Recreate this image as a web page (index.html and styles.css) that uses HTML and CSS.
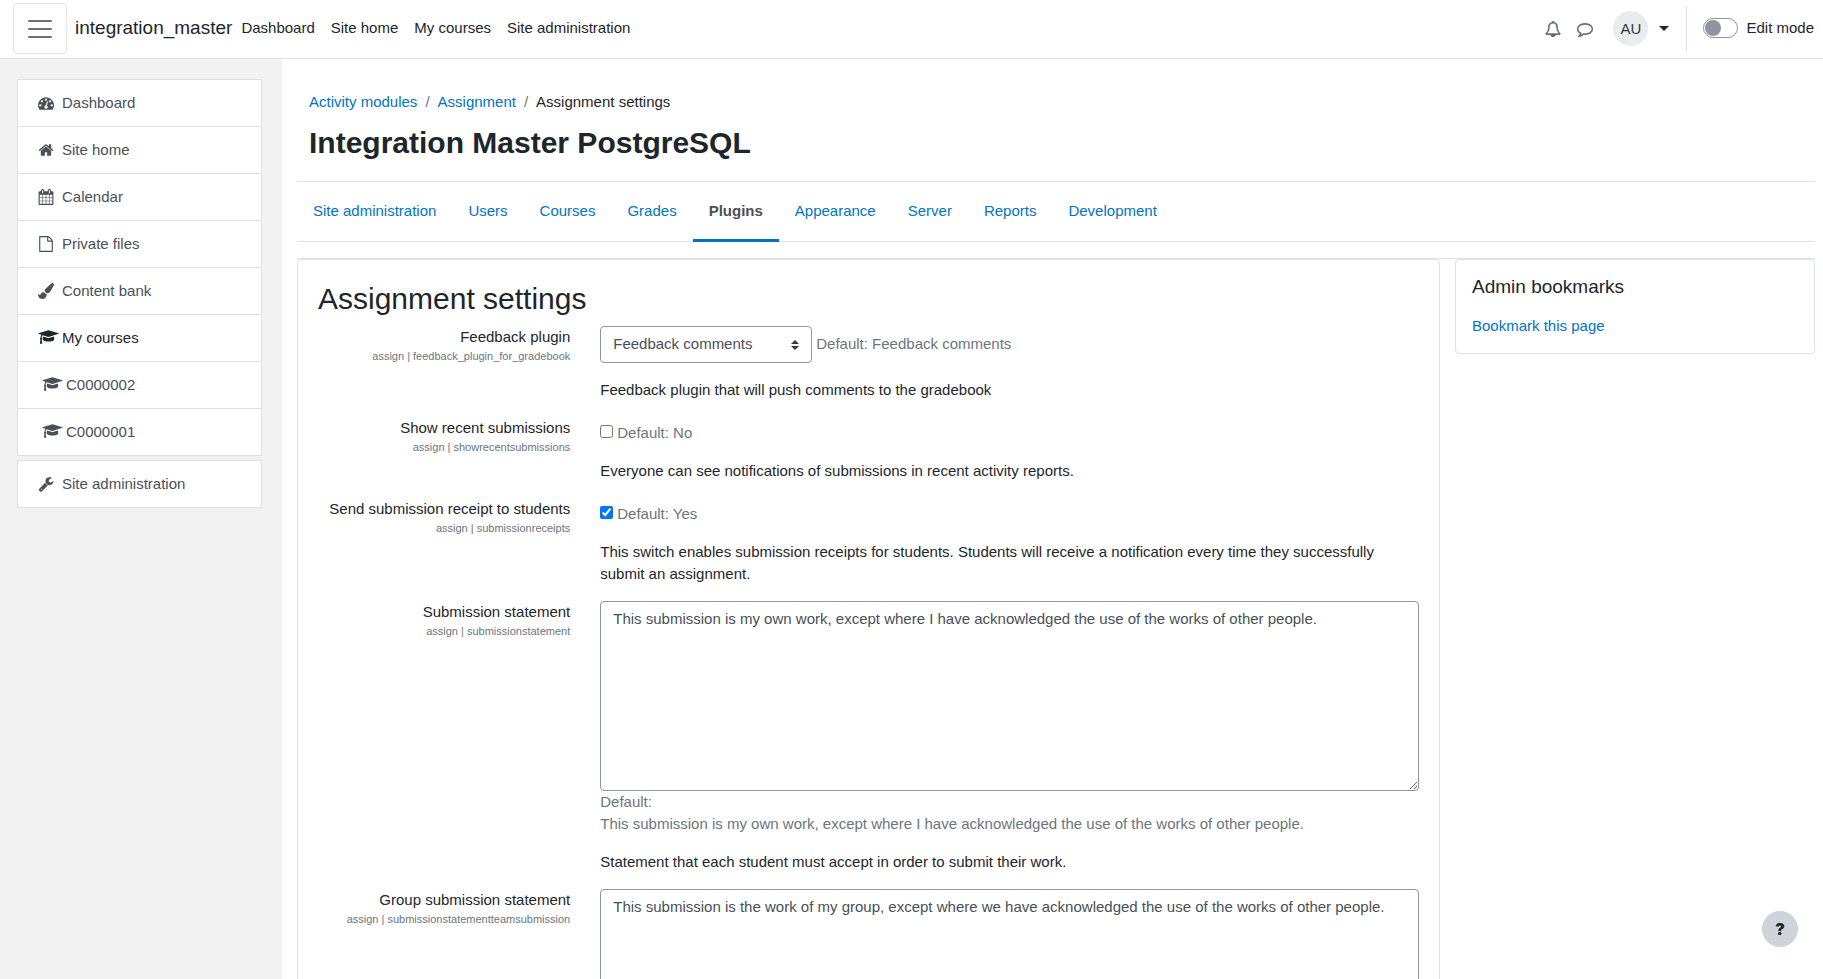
FILE: index.html
```html
<!DOCTYPE html>
<html lang="en">
  <head>
    <meta charset="UTF-8" />
    <meta name="viewport" content="width=device-width, initial-scale=1.0" />
    <title>Assignment settings</title>
    <link rel="stylesheet" href="styles.css">
  </head>
  <body>
    <svg class="sprite" aria-hidden="true">
      <symbol id="i-dashboard" viewBox="0 0 1792 1792"><path d="M384 1152q0-53-37.5-90.5t-90.5-37.5-90.5 37.5-37.5 90.5 37.5 90.5 90.5 37.5 90.5-37.5 37.5-90.5zm192-448q0-53-37.5-90.5t-90.5-37.5-90.5 37.5-37.5 90.5 37.5 90.5 90.5 37.5 90.5-37.5 37.5-90.5zm428 481l101-382q6-26-7.5-48.5t-38.5-29.5-48 6.5-30 39.5l-101 382q-60 5-107 43.5t-63 98.5q-20 77 20 146t117 89 146-20 89-117q16-60-6-117t-72-91zm660-33q0-53-37.5-90.5t-90.5-37.5-90.5 37.5-37.5 90.5 37.5 90.5 90.5 37.5 90.5-37.5 37.5-90.5zm-640-640q0-53-37.5-90.5t-90.5-37.5-90.5 37.5-37.5 90.5 37.5 90.5 90.5 37.5 90.5-37.5 37.5-90.5zm448 192q0-53-37.5-90.5t-90.5-37.5-90.5 37.5-37.5 90.5 37.5 90.5 90.5 37.5 90.5-37.5 37.5-90.5zm320 448q0 261-141 483-19 29-54 29h-1402q-35 0-54-29-141-221-141-483 0-182 71-348t191-286 286-191 348-71 348 71 286 191 191 286 71 348z"/></symbol>
      <symbol id="i-home" viewBox="0 0 1792 1792"><path d="M1472 992v480q0 26-19 45t-45 19h-384v-384h-256v384h-384q-26 0-45-19t-19-45v-480q0-1 .5-3t.5-3l575-474 575 474q1 2 1 6zm223-69l-62 74q-8 9-21 11h-3q-13 0-21-7l-692-577-692 577q-12 8-24 7-13-2-21-11l-62-74q-8-10-7-23.5t11-21.5l719-599q32-26 76-26t76 26l244 204v-195q0-14 9-23t23-9h192q14 0 23 9t9 23v408l219 182q10 8 11 21.5t-7 23.5z"/></symbol>
      <symbol id="i-calendar" viewBox="0 0 1792 1792"><path d="M192 1664h288v-288h-288v288zm352 0h320v-288h-320v288zm-352-352h288v-320h-288v320zm352 0h320v-320h-320v320zm-352-384h288v-288h-288v288zm736 736h320v-288h-320v288zm-384-736h320v-288h-320v288zm768 736h288v-288h-288v288zm-384-352h320v-320h-320v320zm-352-864v-288q0-13-9.5-22.5t-22.5-9.5h-64q-13 0-22.5 9.5t-9.5 22.5v288q0 13 9.5 22.5t22.5 9.5h64q13 0 22.5-9.5t9.5-22.5zm736 864h288v-320h-288v320zm-384-384h320v-288h-320v288zm384 0h288v-288h-288v288zm32-480v-288q0-13-9.5-22.5t-22.5-9.5h-64q-13 0-22.5 9.5t-9.5 22.5v288q0 13 9.5 22.5t22.5 9.5h64q13 0 22.5-9.5t9.5-22.5zm384-64v1280q0 52-38 90t-90 38h-1408q-52 0-90-38t-38-90v-1280q0-52 38-90t90-38h128v-96q0-66 47-113t113-47h64q66 0 113 47t47 113v96h384v-96q0-66 47-113t113-47h64q66 0 113 47t47 113v96h128q52 0 90 38t38 90z"/></symbol>
      <symbol id="i-file" viewBox="0 0 1792 1792"><path d="M1596 380q28 28 48 76t20 88v1152q0 40-28 68t-68 28h-1344q-40 0-68-28t-28-68v-1600q0-40 28-68t68-28h896q40 0 88 20t76 48zm-444-244v376h376q-10-29-22-41l-313-313q-12-12-41-22zm384 1528v-1024h-416q-40 0-68-28t-28-68v-416h-768v1536h1280z"/></symbol>
      <symbol id="i-brush" viewBox="0 0 1792 1792"><path d="M1615 0q70 0 122.5 46.5t52.5 116.5q0 63-45 151-332 629-465 752-97 91-218 91-126 0-216.5-92.5t-90.5-219.5q0-128 92-212l638-579q59-54 130-54zm-909 1034q39 76 106.5 130t150.5 76l1 71q4 213-129.5 347t-348.5 134q-123 0-218-46.5t-152.5-127.5-86.5-183-29-220q7 5 41 30t62 44.5 59 36.5 46 17q41 0 55-37 25-66 57.5-112.5t69.5-76 88-47.5 103-25.5 125-10.5z"/></symbol>
      <symbol id="i-course" viewBox="0 112 2304 1792"><path d="M1774 836l18 316q4 69-82 128t-235 93.5-323 34.5-323-34.5-235-93.5-82-128l18-316 574 181q22 7 48 7t48-7zm530-324q0 23-22 31l-1120 352q-4 1-10 1t-10-1l-652-206q-43 34-71 111.5t-34 178.5q63 36 63 109 0 69-58 107l58 433q2 14-8 25-9 11-24 11h-192q-15 0-24-11-10-11-8-25l58-433q-58-38-58-107 0-73 65-111 11-207 98-330l-333-104q-22-8-22-31t22-31l1120-352q4-1 10-1t10 1l1120 352q22 8 22 31z"/></symbol>
      <symbol id="i-wrench" viewBox="0 0 1792 1792"><path d="M448 1472q0-26-19-45t-45-19-45 19-19 45 19 45 45 19 45-19 19-45zm644-420l-682 682q-37 37-90 37-52 0-91-37l-106-108q-38-36-38-90 0-53 38-91l681-681q39 98 114.5 173.5t173.5 114.5zm634-435q0 39-23 106-47 134-164.5 217.5t-258.5 83.5q-185 0-316.5-131.5t-131.5-316.5 131.5-316.5 316.5-131.5q58 0 121.5 16.5t107.5 46.5q16 11 16 28t-16 28l-293 169v224l193 107q5-3 79-48.5t135.5-81 70.5-35.5q15 0 23.5 10t8.5 25z"/></symbol>
      <symbol id="i-bell" viewBox="0 0 1792 1792"><path d="M912 1696q0-16-16-16-59 0-101.5-42.5t-42.5-101.5q0-16-16-16t-16 16q0 73 51.5 124.5t124.5 51.5q16 0 16-16zm-666-288h1300q-266-300-266-832 0-51-24-105t-69-103-121.5-80.5-169.5-31.5-169.5 31.5-121.5 80.5-69 103-24 105q0 532-266 832zm1482 0q0 52-38 90t-90 38h-448q0 106-75 181t-181 75-181-75-75-181h-448q-52 0-90-38t-38-90q50-42 91-88t85-119.5 74.5-158.5 50-206 19.5-260q0-152 117-282.5t307-158.5q-8-19-8-39 0-40 28-68t68-28 68 28 28 68q0 20-8 39 190 28 307 158.5t117 282.5q0 139 19.5 260t50 206 74.5 158.5 85 119.5 91 88z"/></symbol>
      <symbol id="i-comment" viewBox="0 0 1792 1792"><path d="M896 384q-204 0-381.5 69.5t-282 187.5-104.5 255q0 112 71.5 213.5t201.5 175.5l87 50-27 96q-24 91-70 172 152-63 275-171l43-38 57 6q69 8 130 8 204 0 381.5-69.5t282-187.5 104.5-255-104.5-255-282-187.5-381.5-69.5zm896 512q0 174-120 321.5t-326 233-450 85.5q-70 0-145-8-198 175-460 242-49 14-114 22h-5q-15 0-27-10.5t-16-27.5v-1q-3-4-.5-12t2-10 4.5-9.5l6-9 7-8.5 8-9q7-8 31-34.5t34.5-38 31-39.5 32.5-51 27-59 26-76q-157-89-247.5-220t-90.5-281q0-174 120-321.5t326-233 450-85.5 450 85.5 326 233 120 321.5z"/></symbol>
    </svg>

    <header class="navbar">
      <button class="menu-btn" type="button" aria-label="Side panel">
        <svg width="30" height="30" viewBox="0 0 30 30"><path d="M4 8h22M4 16h22M4 24h22" stroke="#6f6f6f" stroke-width="2" stroke-linecap="round"/></svg>
      </button>
      <a class="brand" href="#">integration_master</a>
      <nav class="primary-nav">
        <a href="#">Dashboard</a>
        <a href="#">Site home</a>
        <a href="#">My courses</a>
        <a href="#">Site administration</a>
      </nav>
      <div class="user-nav">
        <button class="icon-btn" type="button" aria-label="Notifications"><svg class="icon"><use href="#i-bell"/></svg></button>
        <button class="icon-btn" type="button" aria-label="Messages"><svg class="icon"><use href="#i-comment"/></svg></button>
        <button class="user-menu" type="button">
          <span class="avatar">AU</span>
          <span class="caret"></span>
        </button>
        <div class="divider"></div>
        <label class="edit-mode">
          <input type="checkbox" class="switch" />
          Edit mode
        </label>
      </div>
    </header>

    <div class="page">
      <aside class="drawer">
        <nav class="list-group">
          <a href="#"><svg class="icon"><use href="#i-dashboard"/></svg>Dashboard</a>
          <a href="#"><svg class="icon"><use href="#i-home"/></svg>Site home</a>
          <a href="#"><svg class="icon"><use href="#i-calendar"/></svg>Calendar</a>
          <a href="#"><svg class="icon"><use href="#i-file"/></svg>Private files</a>
          <a href="#"><svg class="icon"><use href="#i-brush"/></svg>Content bank</a>
          <a href="#" class="current"><svg class="icon icon-wide"><use href="#i-course"/></svg>My courses</a>
          <a href="#" class="nested"><svg class="icon icon-wide"><use href="#i-course"/></svg>C0000002</a>
          <a href="#" class="nested"><svg class="icon icon-wide"><use href="#i-course"/></svg>C0000001</a>
        </nav>
        <nav class="list-group">
          <a href="#"><svg class="icon"><use href="#i-wrench"/></svg>Site administration</a>
        </nav>
      </aside>

      <main class="main">
        <div class="page-header">
          <ol class="breadcrumb">
            <li><a href="#">Activity modules</a></li>
            <li><a href="#">Assignment</a></li>
            <li>Assignment settings</li>
          </ol>
          <h1>Integration Master PostgreSQL</h1>
        </div>
        <nav class="tabs">
          <a href="#">Site administration</a>
          <a href="#">Users</a>
          <a href="#">Courses</a>
          <a href="#">Grades</a>
          <a href="#" class="active">Plugins</a>
          <a href="#">Appearance</a>
          <a href="#">Server</a>
          <a href="#">Reports</a>
          <a href="#">Development</a>
        </nav>

        <div class="content">
          <form class="card settings">
            <h2>Assignment settings</h2>

            <div class="form-item">
              <div class="form-label">
                <label for="feedback">Feedback plugin</label>
                <span class="shortname">assign | feedback_plugin_for_gradebook</span>
              </div>
              <div class="form-setting">
                <div class="select-line">
                  <select id="feedback">
                    <option>Feedback comments</option>
                  </select>
                  <span class="default">Default: Feedback comments</span>
                </div>
                <p>Feedback plugin that will push comments to the gradebook</p>
              </div>
            </div>

            <div class="form-item">
              <div class="form-label">
                <label for="recent">Show recent submissions</label>
                <span class="shortname">assign | showrecentsubmissions</span>
              </div>
              <div class="form-setting">
                <div class="check-line">
                  <input type="checkbox" id="recent" />
                  <span class="default">Default: No</span>
                </div>
                <p>Everyone can see notifications of submissions in recent activity reports.</p>
              </div>
            </div>

            <div class="form-item">
              <div class="form-label">
                <label for="receipts">Send submission receipt to students</label>
                <span class="shortname">assign | submissionreceipts</span>
              </div>
              <div class="form-setting">
                <div class="check-line">
                  <input type="checkbox" id="receipts" checked />
                  <span class="default">Default: Yes</span>
                </div>
                <p>This switch enables submission receipts for students. Students will receive a notification every time they successfully submit an assignment.</p>
              </div>
            </div>

            <div class="form-item">
              <div class="form-label">
                <label for="statement">Submission statement</label>
                <span class="shortname">assign | submissionstatement</span>
              </div>
              <div class="form-setting">
                <textarea id="statement" rows="8">This submission is my own work, except where I have acknowledged the use of the works of other people.</textarea>
                <div class="default">Default:<br />This submission is my own work, except where I have acknowledged the use of the works of other people.</div>
                <p>Statement that each student must accept in order to submit their work.</p>
              </div>
            </div>

            <div class="form-item">
              <div class="form-label">
                <label for="groupstatement">Group submission statement</label>
                <span class="shortname">assign | submissionstatementteamsubmission</span>
              </div>
              <div class="form-setting">
                <textarea id="groupstatement" rows="8">This submission is the work of my group, except where we have acknowledged the use of the works of other people.</textarea>
              </div>
            </div>
          </form>

          <aside class="card bookmarks">
            <h3>Admin bookmarks</h3>
            <a href="#">Bookmark this page</a>
          </aside>
        </div>
      </main>
    </div>

    <button class="help-btn" type="button" aria-label="Help">?</button>
  </body>
</html>
```

FILE: styles.css
```css
* {
  box-sizing: border-box;
}
body {
  margin: 0;
  height: 100vh;
  display: flex;
  flex-direction: column;
  overflow: hidden;
  background-color: #fff;
  color: #1d262b;
  font-family: "Liberation Sans", Arial, sans-serif;
  font-size: 15px;
  line-height: 22px;
}
h1,
h2,
h3,
p,
ol {
  margin: 0;
  padding: 0;
}
a {
  color: #0074c2;
  text-decoration: none;
}
button,
select,
textarea {
  font: inherit;
  color: inherit;
}
.sprite {
  position: absolute;
  width: 0;
  height: 0;
}
.icon {
  width: 16px;
  height: 16px;
  flex: none;
  fill: currentColor;
}

/* top bar */
.navbar {
  display: flex;
  align-items: center;
  flex: none;
  height: 59px;
  padding: 0 9px 2px 13px;
  border-bottom: 1px solid #dee2e6;
}
.menu-btn {
  display: flex;
  align-items: center;
  justify-content: center;
  width: 54px;
  height: 51px;
  padding: 0;
  border: 1px solid #e3e3e3;
  border-radius: 4px;
  background: none;
}
.brand {
  margin: 0 9px 0 8px;
  font-size: 19px;
  color: #1d262b;
}
.primary-nav {
  display: flex;
  gap: 16px;
}
.primary-nav a {
  color: #1d262b;
}
.user-nav {
  display: flex;
  align-items: center;
  margin-left: auto;
}
.icon-btn {
  display: flex;
  padding: 10px 8px 8px;
  border: 0;
  background: none;
  color: #5c646c;
}
.icon-btn .icon {
  stroke: currentColor;
  stroke-width: 50px;
}
.user-menu {
  display: flex;
  align-items: center;
  gap: 11px;
  padding: 0 17px 0 12px;
  border: 0;
  background: none;
}
.avatar {
  width: 35px;
  height: 35px;
  border-radius: 50%;
  background-color: #e9ecef;
  color: #343a40;
  line-height: 35px;
  text-align: center;
}
.caret {
  border-top: 5px solid #1d262b;
  border-left: 5px solid transparent;
  border-right: 5px solid transparent;
}
.divider {
  width: 1px;
  height: 45px;
  margin-right: 16px;
  background-color: #dee2e6;
}
.edit-mode {
  display: flex;
  align-items: center;
  gap: 8px;
}
.switch {
  appearance: none;
  display: flex;
  align-items: center;
  width: 35px;
  height: 20px;
  margin: 0;
  padding: 0 1px;
  border: 1px solid #8f959e;
  border-radius: 10px;
  background-color: #fff;
}
.switch::before {
  content: "";
  width: 16px;
  height: 16px;
  border-radius: 50%;
  background-color: #8f959e;
}

/* side drawer */
.page {
  display: flex;
  flex: 1;
  min-height: 0;
}
.drawer {
  flex: none;
  width: 282px;
  padding: 20px 20px 0 17px;
  background-color: #f2f2f2;
}
.list-group {
  margin-bottom: 4px;
  border: 1px solid #dfdfdf;
  background-color: #fff;
}
.list-group a {
  display: flex;
  align-items: center;
  gap: 8px;
  padding: 12px 20px;
  color: #495057;
}
.list-group a + a {
  border-top: 1px solid #dfdfdf;
}
.list-group .current {
  color: #1d262b;
}
.list-group .nested {
  padding-left: 24px;
}
.icon-wide {
  width: 21px;
  margin-right: -5px;
}

/* page header */
.main {
  flex: 1;
  min-width: 0;
  padding: 0 8px 0 15px;
}
.page-header {
  padding: 32px 12px 20px;
}
.breadcrumb {
  display: flex;
  margin-bottom: 12px;
  list-style: none;
}
.breadcrumb li + li::before {
  content: "/";
  padding: 0 8px;
  color: #6c757d;
}
h1 {
  font-size: 30px;
  line-height: 36px;
}
.tabs {
  display: flex;
  border-top: 1px solid #dee2e6;
  border-bottom: 1px solid #dee2e6;
}
.tabs a {
  margin-bottom: -1px;
  padding: 18px 16px 17px;
  border-bottom: 3px solid transparent;
}
.tabs .active {
  border-bottom-color: #0074c2;
  color: #495057;
  font-weight: bold;
}

/* content */
.content {
  display: flex;
  align-items: flex-start;
  gap: 15px;
  margin-top: 16px;
  border-top: 1px solid #dee2e6;
}
.card {
  border: 1px solid #dee2e6;
  border-radius: 4px;
}
.settings {
  flex: 1;
  min-width: 0;
  padding: 20px;
}
.settings h2 {
  margin-bottom: 8px;
  font-size: 30px;
  font-weight: normal;
  line-height: 38px;
}
.bookmarks {
  flex: none;
  width: 360px;
  padding: 16px;
}
.bookmarks h3 {
  margin-bottom: 17px;
  font-size: 19px;
  font-weight: normal;
}
.bookmarks a {
  display: block;
}
.form-item {
  display: grid;
  grid-template-columns: calc(25% - 23px) 1fr;
  gap: 30px;
  margin-bottom: 16px;
}
.form-label {
  text-align: right;
}
.form-label label {
  display: block;
}
.shortname {
  display: block;
  color: #6c757d;
  font-size: 11px;
  line-height: 17px;
}
.form-setting p {
  margin-top: 16px;
}
.default {
  color: #6c757d;
}
.select-line {
  display: flex;
  align-items: center;
  gap: 4px;
}
.select-line .default {
  padding-bottom: 2px;
}
.select-line select {
  appearance: none;
  height: 37px;
  width: 212px;
  padding: 0 28px 1px 12px;
  border: 1px solid #8f959e;
  border-radius: 4px;
  background: #fff url("data:image/svg+xml,%3csvg xmlns='http://www.w3.org/2000/svg' width='4' height='5' viewBox='0 0 4 5'%3e%3cpath fill='%23343a40' d='M2 0L0 2h4zm0 5L0 3h4z'/%3e%3c/svg%3e") no-repeat right 12px center / 8px 10px;
  color: #495057;
}
.check-line {
  display: flex;
  align-items: flex-start;
  gap: 4px;
  padding-top: 5px;
}
.check-line input {
  width: 13px;
  height: 13px;
  margin: 3px 0 0;
}
textarea {
  display: block;
  width: 100%;
  height: 190px;
  padding: 6px 12px;
  border: 1px solid #8f959e;
  border-radius: 4px;
  color: #495057;
}

.help-btn {
  position: fixed;
  right: 25px;
  bottom: 32px;
  width: 36px;
  height: 36px;
  padding: 0;
  border: 0;
  border-radius: 50%;
  background-color: #ced4da;
  font-family: Inter, sans-serif;
  font-size: 16px;
  font-weight: 900;
}
```
